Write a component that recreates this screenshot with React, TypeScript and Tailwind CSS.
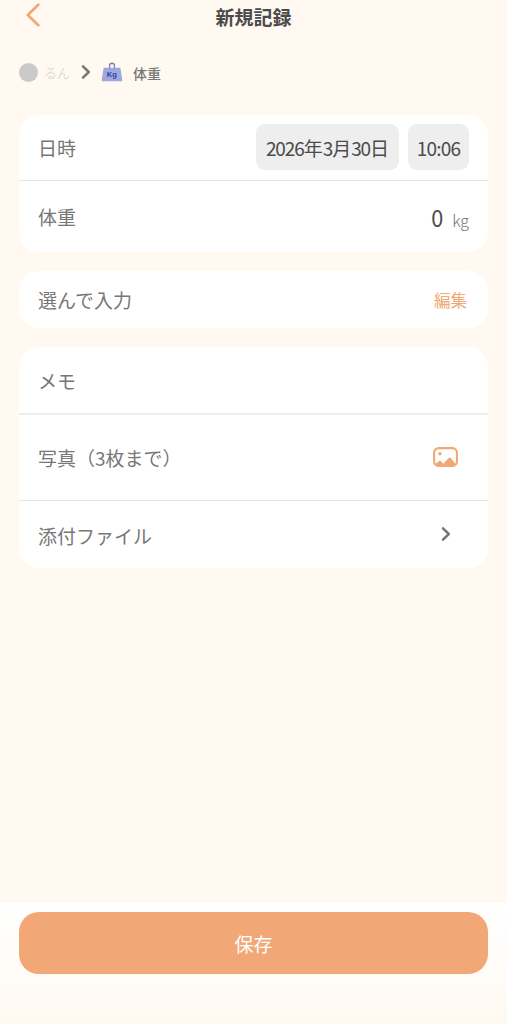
import type { ReactNode } from "react";

function Chevron({ className }: { className: string }) {
  return (
    <svg viewBox="0 0 10 16" className={className} fill="none" stroke="#777777" strokeWidth="2.5" strokeLinecap="round" strokeLinejoin="round">
      <path d="M2 2.4L7.8 8L2 13.6" />
    </svg>
  );
}

function WeightIcon() {
  return (
    <svg viewBox="0 0 22 20" className="ml-[6px] h-5 w-[22px] shrink-0">
      <path d="M8.6 6V3.6A2.4 2.4 0 0 1 13.4 3.6V6" fill="none" stroke="#7982cb" strokeWidth="1.4" />
      <path d="M3.2 5.8H18.8Q19.4 5.8 19.5 6.4L21.4 18.5Q21.4 19.3 20.7 19.3H1.3Q.6 19.3 .6 18.5L2.5 6.4Q2.6 5.8 3.2 5.8Z" fill="#9fa8da" />
      <text x="10.8" y="15" textAnchor="middle" fontFamily="Liberation Sans, sans-serif" fontSize="7.5" fontWeight="700" fill="#303fa9">Kg</text>
    </svg>
  );
}

function PhotoIcon() {
  return (
    <svg viewBox="0 0 25 20" className="mr-[11px] mb-[2px] h-5 w-[25px]">
      <rect x="1.1" y="1.1" width="22.8" height="17.8" rx="4.4" fill="none" stroke="#f1a876" strokeWidth="2.1" />
      <circle cx="7" cy="6.8" r="1.7" fill="#f1a876" />
      <path d="M2 17.5L6.1 14Q7 13 7.8 14L10.2 16.7L15.7 11Q16.8 10 17.8 11L23 17.5L21 19H4Z" fill="#f1a876" />
    </svg>
  );
}

function Row({ label, className, children }: { label: string; className: string; children?: ReactNode }) {
  return (
    <div className={`flex items-center justify-between px-[19px] ${className}`}>
      <span>{label}</span>
      {children}
    </div>
  );
}

export default function App() {
  return (
    <div className="flex h-[1024px] w-full flex-col overflow-hidden bg-[#fff9f2] font-['Noto_Sans_CJK_JP',sans-serif] text-[19px] leading-[28px] text-[#777777]">
      <header className="grid h-[34px] shrink-0 grid-cols-[60px_1fr_60px] items-center">
        <svg viewBox="0 0 16 24" className="mb-1 ml-[25px] h-6 w-4" fill="none" stroke="#f1a876" strokeWidth="2.7" strokeLinecap="round" strokeLinejoin="round">
          <path d="M13.3 1.8L2.8 12L13.3 22.2" />
        </svg>
        <h1 className="text-center font-bold text-[#4b4b4b]">新規記録</h1>
      </header>

      <nav className="mt-[27px] flex h-[22px] shrink-0 items-center pl-[19px] text-[14px] leading-[20px]">
        <span className="h-[19px] w-[19px] rounded-full bg-[#cacaca]" />
        <span className="ml-[6px] mt-[2px] w-[29px] text-[13px] font-light text-[#cfcfcf]">るん</span>
        <Chevron className="ml-[8px] h-4 w-[10px]" />
        <span className="ml-[4px] flex"><WeightIcon /></span>
        <span className="ml-[10px] mt-[1px] font-medium">体重</span>
      </nav>

      <main className="mt-[32px] flex flex-col gap-[19px] px-[19px]">
        <section className="h-[137px] rounded-[20px] bg-white">
          <Row label="日時" className="h-[66px] border-b border-[#e5e5e5]">
            <div className="mb-[2px] flex gap-[9px] text-[#4b4b4b]">
              <span className="flex h-[46px] w-[143px] items-center justify-center whitespace-nowrap rounded-[9px] bg-[#eeeeee] pt-[2px]">
                <span className="tracking-[-1.1px]">2026</span>年<span className="tracking-[-1.1px]">3</span>月<span className="tracking-[-1.1px]">30</span>日
              </span>
              <span className="flex h-[46px] w-[61px] items-center justify-center rounded-[9px] bg-[#eeeeee] pt-[2px] tracking-[-0.8px]">10:06</span>
            </div>
          </Row>
          <Row label="体重" className="h-[71px] pt-px">
            <div className="mt-[3px] flex items-baseline gap-[9px]">
              <span className="origin-right scale-x-90 text-[24px] text-[#4b4b4b]">0</span>
              <span className="text-[16px] font-light">kg</span>
            </div>
          </Row>
        </section>

        <section className="h-[57px] rounded-[20px] bg-white">
          <Row label="選んで入力" className="h-[57px]">
            <button className="mr-[2px] text-[16.5px] text-[#f1a876]">編集</button>
          </Row>
        </section>

        <section className="h-[221px] rounded-[20px] bg-white">
          <Row label="メモ" className="h-[68px] border-b-2 border-[#eeeeee] pt-[2px]" />
          <Row label="写真（3枚まで）" className="h-[86px] border-b border-[#e5e5e5]">
            <PhotoIcon />
          </Row>
          <Row label="添付ファイル" className="h-[67px] pt-[2px]">
            <Chevron className="mr-[18px] mb-[3px] h-4 w-[10px]" />
          </Row>
        </section>
      </main>

      <footer className="mt-auto h-[121px] shrink-0 bg-linear-to-b from-white to-[#fff9f2] px-[19px] pt-[9px]">
        <button className="h-[62px] w-full rounded-[20px] bg-[#f1a876] pt-[2px] text-white">保存</button>
      </footer>
    </div>
  );
}
